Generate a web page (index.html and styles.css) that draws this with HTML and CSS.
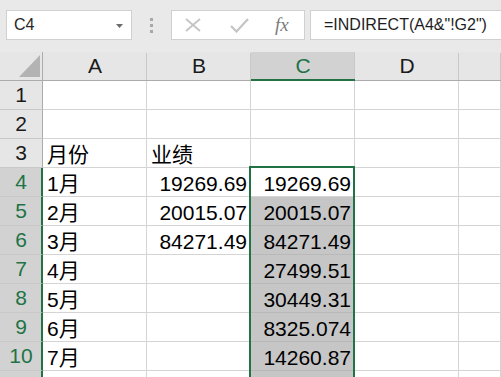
FILE: index.html
```html
<!DOCTYPE html>
<html lang="zh-CN">
<head>
  <meta charset="UTF-8">
  <title>INDIRECT</title>
  <link rel="stylesheet" href="styles.css">
</head>
<body>
  <div class="toolbar">
    <div class="namebox">
      <span>C4</span>
      <svg class="caret" width="7" height="4" viewBox="0 0 7 4"><path d="M0 0H7L3.5 4Z" fill="#6b6b6b"/></svg>
    </div>
    <div class="grip"><i></i><i></i><i></i></div>
    <div class="fbtns">
      <svg class="cancel" width="16" height="14" viewBox="0 0 16 14"><path d="M1 1L15 13M15 1L1 13" stroke="#c4c4c4" stroke-width="1.8" fill="none"/></svg>
      <svg class="enter" width="19" height="15" viewBox="0 0 19 15"><path d="M1 8L6.5 13.5L18 1" stroke="#c4c4c4" stroke-width="2.2" fill="none"/></svg>
      <span class="fx">fx</span>
    </div>
    <div class="formula">=INDIRECT(A4&amp;"!G2")</div>
  </div>

  <div class="sheet">
    <div class="corner"><svg width="21" height="22" viewBox="0 0 21 22"><path d="M21 0V22H0Z" fill="#b3b3b3"/></svg></div>
    <div class="colhead">A</div>
    <div class="colhead">B</div>
    <div class="colhead on">C</div>
    <div class="colhead">D</div>
    <div class="colhead"></div>

    <div class="rowhead">1</div><div class="cell"></div><div class="cell"></div><div class="cell"></div><div class="cell"></div><div class="cell"></div>
    <div class="rowhead">2</div><div class="cell"></div><div class="cell"></div><div class="cell"></div><div class="cell"></div><div class="cell"></div>
    <div class="rowhead">3</div><div class="cell">月份</div><div class="cell">业绩</div><div class="cell"></div><div class="cell"></div><div class="cell"></div>
    <div class="rowhead on">4</div><div class="cell">1月</div><div class="cell num">19269.69</div><div class="cell num">19269.69</div><div class="cell"></div><div class="cell"></div>
    <div class="rowhead on">5</div><div class="cell">2月</div><div class="cell num">20015.07</div><div class="cell num sel">20015.07</div><div class="cell"></div><div class="cell"></div>
    <div class="rowhead on">6</div><div class="cell">3月</div><div class="cell num">84271.49</div><div class="cell num sel">84271.49</div><div class="cell"></div><div class="cell"></div>
    <div class="rowhead on">7</div><div class="cell">4月</div><div class="cell"></div><div class="cell num sel">27499.51</div><div class="cell"></div><div class="cell"></div>
    <div class="rowhead on">8</div><div class="cell">5月</div><div class="cell"></div><div class="cell num sel">30449.31</div><div class="cell"></div><div class="cell"></div>
    <div class="rowhead on">9</div><div class="cell">6月</div><div class="cell"></div><div class="cell num sel">8325.074</div><div class="cell"></div><div class="cell"></div>
    <div class="rowhead on">10</div><div class="cell">7月</div><div class="cell"></div><div class="cell num sel">14260.87</div><div class="cell"></div><div class="cell"></div>
    <div class="rowhead on">11</div><div class="cell">8月</div><div class="cell"></div><div class="cell num sel">30881.06</div><div class="cell"></div><div class="cell"></div>

    <div class="range"></div>
  </div>
</body>
</html>
```

FILE: styles.css
```css
html, body {
  margin: 0;
  padding: 0;
  width: 501px;
  height: 377px;
  overflow: hidden;
  background: #fff;
  font-family: "Liberation Sans", Arial, "Noto Sans CJK SC", sans-serif;
}
.toolbar {
  height: 52px;
  box-sizing: border-box;
  padding-top: 10px;
  background: #e9e9e9;
  display: flex;
  align-items: flex-start;
}
.namebox {
  margin-left: 6px;
  width: 126px;
  height: 30px;
  box-sizing: border-box;
  background: #fff;
  border: 1px solid #d0d0d0;
  display: flex;
  align-items: center;
  justify-content: space-between;
  padding: 0 8px 0 7px;
  font-size: 16px;
  color: #262626;
}
.caret {
  margin-top: 1px;
}
.grip {
  margin-left: 18px;
  width: 3px;
  height: 30px;
  display: flex;
  flex-direction: column;
  justify-content: center;
  gap: 3px;
}
.grip i {
  display: block;
  width: 3px;
  height: 3px;
  background: #a8a8a8;
}
.fbtns {
  margin-left: 18px;
  width: 134px;
  height: 30px;
  box-sizing: border-box;
  background: #fff;
  border: 1px solid #d0d0d0;
  display: flex;
  align-items: center;
  padding-left: 13px;
}
.enter {
  margin-left: 29px;
}
.fx {
  margin-left: 26px;
  font-family: "Liberation Serif", "Times New Roman", serif;
  font-style: italic;
  font-size: 19px;
  color: #7b7b7b;
  margin-top: -1px;
}
.formula {
  margin-left: 5px;
  margin-right: -3px;
  flex: 1;
  height: 30px;
  box-sizing: border-box;
  background: #fff;
  border: 1px solid #d0d0d0;
  font-size: 16px;
  line-height: 28px;
  padding-left: 13px;
  color: #1e1e1e;
  white-space: nowrap;
}

/* worksheet */
.sheet {
  position: relative;
  display: grid;
  grid-template-columns: 43px 104px 104px 104px 104px 1fr;
  grid-auto-rows: 29px;
  font-size: 21px;
  line-height: 24px;
  color: #000;
}
.corner, .colhead, .rowhead {
  background: #e6e6e6;
  box-sizing: border-box;
}
.corner {
  border-right: 1px solid #ababab;
  border-bottom: 1px solid #ababab;
  display: flex;
  align-items: flex-end;
  justify-content: flex-end;
  padding: 0 2px 3px 0;
}
.colhead {
  border-bottom: 1px solid #ababab;
  display: flex;
  align-items: center;
  justify-content: center;
  color: #1a1a1a;
  position: relative;
}
.colhead::after {
  content: "";
  position: absolute;
  right: 0;
  top: 1px;
  bottom: 0;
  width: 1px;
  background: #c8c8c8;
}
.colhead.on {
  background: #d2d2d2;
  color: #217346;
  border-bottom: 2px solid #217346;
}
.rowhead {
  border-right: 1px solid #ababab;
  border-bottom: 1px solid #c8c8c8;
  display: flex;
  align-items: center;
  justify-content: center;
  color: #1a1a1a;
}
.rowhead.on {
  background: #d2d2d2;
  color: #217346;
  border-right: 2px solid #217346;
  padding-left: 1px;
}
.cell {
  box-sizing: border-box;
  border-right: 1px solid #d4d4d4;
  border-bottom: 1px solid #d4d4d4;
  display: flex;
  align-items: flex-end;
  padding: 0 3px 0 4px;
  white-space: nowrap;
  overflow: hidden;
}
.cell.num {
  justify-content: flex-end;
}
.cell.sel {
  background: #c6c6c6;
  border-bottom-color: #b9b9b9;
}
.range {
  position: absolute;
  left: 249px;
  top: 114px;
  width: 106px;
  height: 260px;
  box-sizing: border-box;
  border: 2px solid #217346;
  pointer-events: none;
}
```
